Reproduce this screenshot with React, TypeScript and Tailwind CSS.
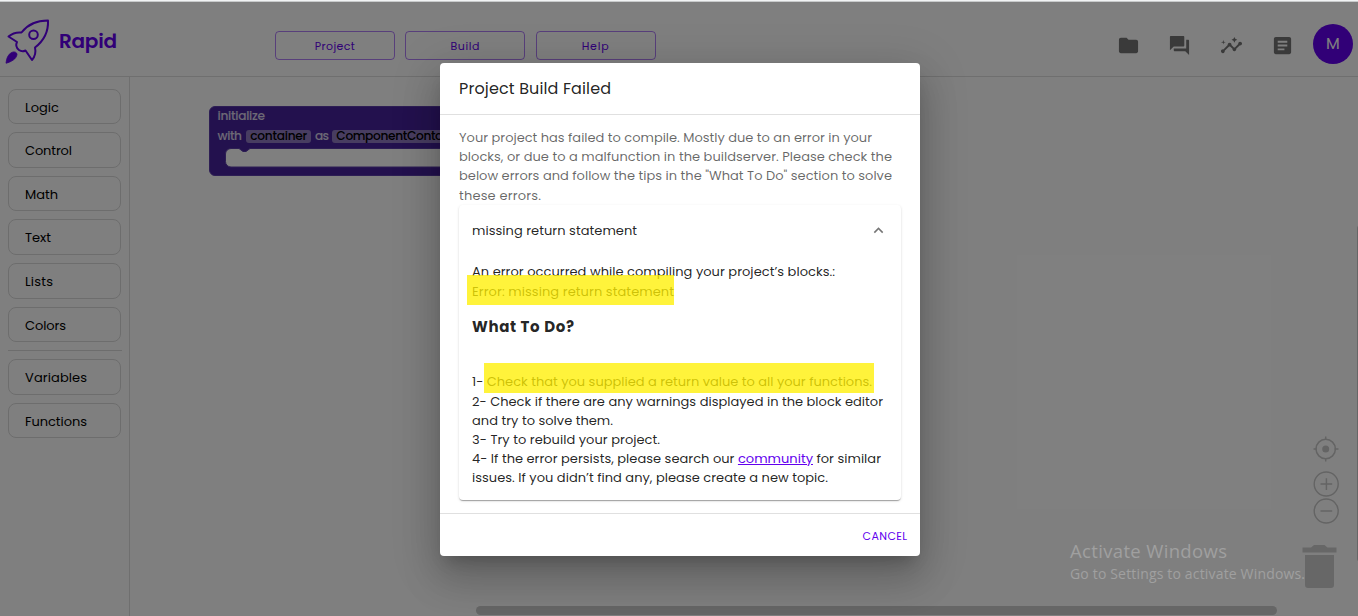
import { useLayoutEffect, useRef, useState, type ReactNode } from "react";
import { MdArticle, MdExpandLess, MdFolder, MdForum, MdInsights } from "react-icons/md";

/** A single line of text whose tracking is computed so that it spans `width` pixels. */
function Line({ width, className = "", children }: { width: number; className?: string; children: ReactNode }) {
  const ref = useRef<HTMLSpanElement>(null);
  const [spacing, setSpacing] = useState(0);
  useLayoutEffect(() => {
    const el = ref.current;
    if (!el) return;
    el.style.letterSpacing = "0px";
    const natural = el.getBoundingClientRect().width;
    const count = (el.textContent ?? "").length;
    const next = (width - natural) / Math.max(1, count - 1);
    el.style.letterSpacing = `${next}px`;
    setSpacing(next);
  }, [width]);
  return (
    <span ref={ref} className={`inline-block whitespace-pre ${className}`} style={{ letterSpacing: `${spacing}px` }}>
      {children}
    </span>
  );
}

function Rocket() {
  return (
    <svg width="46" height="48" viewBox="0 0 46 48" className="shrink-0" fill="none" stroke="#6200ee" strokeWidth="2" strokeLinejoin="round">
      <path d="M43 4.500C33 4.500 23 8 16.500 16.500C11.500 16 7 17.500 3.500 20.500L12 26C10.500 29 11.500 32 14 34C16 35.500 18.500 35.500 20.500 34.500L27 44C30.500 40 31 36 30 31.500C38.500 25 43.500 16 43 4.500Z" />
      <circle cx="28.500" cy="18.800" r="4.300" />
      <path d="M1 47.200C1.500 42 3 38.500 6.500 36.500C9 35.200 12 36 12 38.500C11.500 43 6 46 1 47.200Z" fill="#6200ee" strokeWidth="0.800" />
    </svg>
  );
}

function HeaderButton({ label, width }: { label: string; width: number }) {
  return (
    <button className="flex h-[29px] w-[120px] items-center justify-center rounded border border-[#6200ee]/50 pt-px text-[11px] text-[#6200ee]">
      <Line width={width}>{label}</Line>
    </button>
  );
}

function Header() {
  return (
    <header className="flex h-[75px] shrink-0 items-start border-b border-[#dedede]">
      <div className="flex w-[275px] pl-[5px] pt-[14px]">
        <Rocket />
        <Line width={58} className="ml-[8px] mt-[13px] text-[20px] font-semibold leading-[24px] text-[#6200ee]">Rapid</Line>
      </div>
      <nav className="flex gap-[10.300px] pt-[29px]">
        <HeaderButton label="Project" width={40} />
        <HeaderButton label="Build" width={29} />
        <HeaderButton label="Help" width={27} />
      </nav>
      <div className="ml-auto flex gap-[28.300px] pr-[19px] pt-[31.500px] text-[23px] text-[#757575]">
        <MdFolder />
        <MdForum />
        <MdInsights />
        <MdArticle />
      </div>
      <div className="mr-[5px] mt-[22px] flex size-10 items-center justify-center rounded-full bg-[#6200ee] text-[16px] text-white">M</div>
    </header>
  );
}

const categories: [string, number][] = [
  ["Logic", 34],
  ["Control", 47],
  ["Math", 33],
  ["Text", 26],
  ["Lists", 28],
  ["Colors", 41],
];
const extras: [string, number][] = [
  ["Variables", 62],
  ["Functions", 62],
];

function Category({ label, width }: { label: string; width: number }) {
  return (
    <div className="flex h-[35.550px] w-[113px] shrink-0 items-center rounded-[8px] border border-[#dadada] pl-[16px] pt-[2px] text-[13px] text-black">
      <Line width={width}>{label}</Line>
    </div>
  );
}

function Sidebar() {
  return (
    <aside className="flex w-[130px] shrink-0 flex-col gap-2 border-r border-[#dedede] pl-2 pt-[11.800px]">
      {categories.map(([label, width]) => (
        <Category key={label} label={label} width={width} />
      ))}
      <div className="h-px w-[114px] shrink-0 bg-[#dadada]" />
      {extras.map(([label, width]) => (
        <Category key={label} label={label} width={width} />
      ))}
    </aside>
  );
}

function InitializeBlock() {
  return (
    <div className="absolute left-[79px] top-[29px] h-[70px] w-[300px] text-[12.200px] font-medium text-white/80">
      <svg width="300" height="70" className="absolute inset-0">
        <path d="M6 .5H300V69.500H6A5.500 5.500 0 0 1 .5 64V6A5.500 5.500 0 0 1 6 .5Z" fill="#46239c" stroke="#5a3ca8" />
        <path d="M22 42.500H30L34 45.500H37L41 42.500H300V61H22A5.500 5.500 0 0 1 16.500 55.500V48A5.500 5.500 0 0 1 22 42.500Z" fill="#fff" stroke="#5a3ca8" />
      </svg>
      <div className="relative pl-[8.500px] pt-[1px]">
        <div className="h-[20px] leading-[18px]"><Line width={47.5}>initialize</Line></div>
        <div className="flex items-center leading-[18px]">
          <Line width={24.5}>with</Line>
          <span className="ml-[4.500px] flex h-[13px] w-[65px] items-center justify-center rounded-[3px] bg-white/40 text-black"><Line width={57}>container</Line></span>
          <Line width={14} className="ml-[4px]">as</Line>
          <span className="ml-[4px] flex h-[13px] w-[140px] items-center rounded-[3px] bg-white/40 pl-[4px] text-black"><Line width={129}>ComponentContainer</Line></span>
        </div>
      </div>
    </div>
  );
}

function CanvasControls() {
  return (
    <svg width="40" height="155" className="absolute right-[18px] top-[358px]" fill="none" stroke="#c8c8c8" strokeWidth="1.500">
      <circle cx="25.700" cy="14" r="9.700" />
      <circle cx="25.700" cy="14" r="3.500" fill="#c8c8c8" stroke="none" />
      <path d="M25.700 1.500V5M25.700 23V26.500M13.500 14H17M34.500 14H38.500" />
      <circle cx="26.200" cy="49" r="12" strokeWidth="1.400" />
      <path d="M20.500 49H32.200M26.400 43.200V55" />
      <circle cx="26.200" cy="76" r="12" strokeWidth="1.400" />
      <path d="M20.500 76H32.200" />
      <path d="M2.500 112.500H11L14 110H24.500L27.500 112.500H36.500V117.500H2.500ZM5 120H34V150Q34 153 31 153H8Q5 153 5 150Z" fill="#cfcfcf" stroke="none" />
    </svg>
  );
}

function Workspace() {
  return (
    <main className="relative grow overflow-hidden">
      <InitializeBlock />
      <CanvasControls />
      <div className="absolute left-[346px] top-[529px] h-[9px] w-[801px] rounded-full bg-[#ccc]" />
      <div className="absolute left-[1227px] top-[147px] h-[339px] w-[9px] rounded-full bg-[#ccc]" />
    </main>
  );
}

function ErrorCard() {
  return (
    <section className="relative h-[295px] rounded-[4px] bg-white px-[13px] text-[13px] leading-[19.200px] text-black/87 shadow-[0_2px_1px_-1px_rgba(0,0,0,0.2),0_1px_1px_0_rgba(0,0,0,0.14),0_1px_3px_0_rgba(0,0,0,0.12)]">
      <div className="flex items-center justify-between pt-[16px]">
        <Line width={165}>missing return statement</Line>
        <MdExpandLess className="text-[19px] text-black/54" />
      </div>
      <div className="mt-[22px] flex flex-col items-start">
        <Line width={363}>An error occurred while compiling your project’s blocks.:</Line>
        <Line width={202} className="mt-[1px]">Error: missing return statement</Line>
      </div>
      <h2 className="mt-[14px] text-[15px] font-bold leading-[22px]"><Line width={102}>What To Do?</Line></h2>
      <div className="mt-[34px] flex flex-col items-start">
        <Line width={400}>1- Check that you supplied a return value to all your functions.</Line>
        <Line width={411} className="mt-[0.700px]">2- Check if there are any warnings displayed in the block editor</Line>
        <Line width={141}>and try to solve them.</Line>
        <Line width={188}>3- Try to rebuild your project.</Line>
        <Line width={409}>
          4- If the error persists, please search our <a className="text-[#6200ee] underline">community</a> for similar
        </Line>
        <Line width={356}>issues. If you didn’t find any, please create a new topic.</Line>
      </div>
      <div className="absolute left-[8px] top-[70px] h-[30px] w-[207px] bg-[#fff000]/77" />
      <div className="absolute left-[25px] top-[158px] h-[30px] w-[390px] bg-[#fff000]/77" />
    </section>
  );
}

function BuildFailedDialog() {
  return (
    <div role="dialog" className="flex h-[493px] w-[480px] flex-col rounded-[4px] bg-white shadow-[0_11px_15px_-7px_rgba(0,0,0,0.2),0_24px_38px_3px_rgba(0,0,0,0.14),0_9px_46px_8px_rgba(0,0,0,0.12)]">
      <h1 className="h-[52px] border-b border-black/12 pl-[19px] pt-[14px] text-[16px] leading-[24px] text-black/87">
        <Line width={152}>Project Build Failed</Line>
      </h1>
      <div className="h-[398px] px-[19px] pt-[13px]">
        <div className="flex h-[77px] flex-col items-start text-[13px] leading-[19.200px] text-black/60">
          <Line width={413}>Your project has failed to compile. Mostly due to an error in your</Line>
          <Line width={433}>blocks, or due to a malfunction in the buildserver. Please check the</Line>
          <Line width={433}>below errors and follow the tips in the "What To Do" section to solve</Line>
          <Line width={82}>these errors.</Line>
        </div>
        <ErrorCard />
      </div>
      <footer className="flex h-[43px] items-center justify-end border-t border-black/12 pr-[12.500px] pt-[2px] text-[11px] text-[#6200ee]">
        <Line width={44.5}>CANCEL</Line>
      </footer>
    </div>
  );
}

export default function App() {
  return (
    <div className="relative flex h-[616px] w-[1358px] flex-col overflow-hidden bg-white font-['Poppins','Inter',sans-serif]">
      <div className="h-[2px] shrink-0 border-b border-[#c8cacb] bg-[#f1f3f4]" />
      <Header />
      <div className="flex min-h-0 grow">
        <Sidebar />
        <Workspace />
      </div>
      <div className="absolute inset-x-0 bottom-0 top-[2px] flex items-start justify-center bg-black/50 pl-[2px] pt-[61px]">
        <BuildFailedDialog />
      </div>
      <div className="absolute left-[1070px] top-[538px] flex flex-col items-start font-['Open_Sans',sans-serif] text-[#a0a0a0]">
        <Line width={157} className="text-[18.500px] leading-[26px]">Activate Windows</Line>
        <Line width={235} className="text-[14px] leading-[20px]">Go to Settings to activate Windows.</Line>
      </div>
    </div>
  );
}
